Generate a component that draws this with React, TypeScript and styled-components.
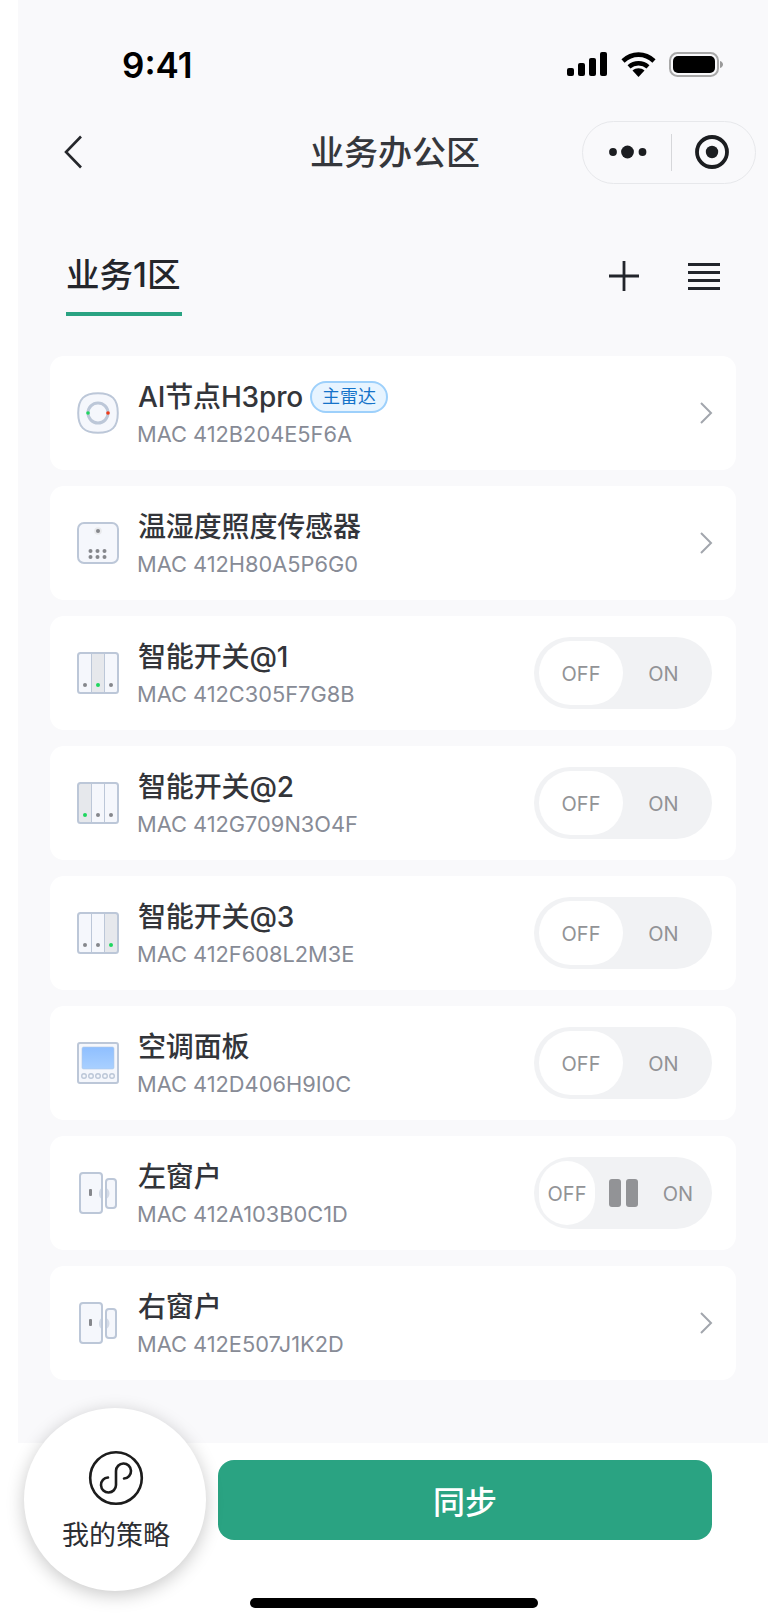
import React from "react";
import styled, { createGlobalStyle } from "styled-components";

const FONT = `Inter, "Noto Sans CJK SC", sans-serif`;

type Device = {
  name: string;
  mac: string;
  icon: "radar" | "sensor" | "switch" | "panel" | "window";
  activeKey?: number;
  badge?: string;
  control: "arrow" | "toggle" | "curtain";
};

const devices: Array<Device> = [
  { name: "AI节点H3pro", mac: "412B204E5F6A", icon: "radar", badge: "主雷达", control: "arrow" },
  { name: "温湿度照度传感器", mac: "412H80A5P6G0", icon: "sensor", control: "arrow" },
  { name: "智能开关@1", mac: "412C305F7G8B", icon: "switch", activeKey: 1, control: "toggle" },
  { name: "智能开关@2", mac: "412G709N3O4F", icon: "switch", activeKey: 0, control: "toggle" },
  { name: "智能开关@3", mac: "412F608L2M3E", icon: "switch", activeKey: 2, control: "toggle" },
  { name: "空调面板", mac: "412D406H9I0C", icon: "panel", control: "toggle" },
  { name: "左窗户", mac: "412A103B0C1D", icon: "window", control: "curtain" },
  { name: "右窗户", mac: "412E507J1K2D", icon: "window", control: "arrow" },
];

const EDGE = "#bcc7d8";
const FILL = "#f5f7fc";

const DeviceIcon = ({ device }: { device: Device }) => {
  if (device.icon === "radar") {
    return (
      <svg width="42" height="42" viewBox="0 0 42 42">
        <path
          d="M21 1.2C35 1.2 40.8 7 40.8 21C40.8 35 35 40.8 21 40.8C7 40.8 1.2 35 1.2 21C1.2 7 7 1.2 21 1.2Z"
          fill={FILL}
          stroke={EDGE}
          strokeWidth="2"
        />
        <circle cx="21" cy="21" r="10" fill="none" stroke={EDGE} strokeWidth="3" />
        <circle cx="11" cy="21" r="1.8" fill="#1fd65f" />
        <circle cx="31" cy="21" r="1.8" fill="#f03a17" />
      </svg>
    );
  }
  if (device.icon === "sensor") {
    const dots = [13.5, 20.5, 27.5];
    return (
      <svg width="42" height="42" viewBox="0 0 42 42">
        <rect x="1" y="1" width="40" height="40" rx="6" fill={FILL} stroke={EDGE} strokeWidth="2" />
        <circle cx="21" cy="9" r="3.8" fill="#e8e9ec" />
        <circle cx="21" cy="9" r="2" fill="#85878c" />
        {dots.map((x) => (
          <React.Fragment key={x}>
            <circle cx={x} cy="29" r="2" fill="#85878c" />
            <circle cx={x} cy="35" r="2" fill="#85878c" />
          </React.Fragment>
        ))}
      </svg>
    );
  }
  if (device.icon === "switch") {
    const columns = [
      { x: 2, w: 13, dot: 8 },
      { x: 15, w: 13, dot: 21 },
      { x: 28, w: 12, dot: 34 },
    ];
    return (
      <svg width="42" height="42" viewBox="0 0 42 42">
        <rect x="1" y="1" width="40" height="40" rx="2.5" fill={FILL} />
        {columns.map((c, i) => (
          <React.Fragment key={c.x}>
            {i === device.activeKey && <rect x={c.x} y="1.5" width={c.w} height="39" fill="#e6e8ec" />}
            <circle cx={c.dot} cy="33" r="2" fill={i === device.activeKey ? "#1fd65f" : "#85878c"} />
          </React.Fragment>
        ))}
        <path d="M14.5 1V41M27.5 1V41" stroke={EDGE} strokeWidth="1" />
        <rect x="1" y="1" width="40" height="40" rx="2.5" fill="none" stroke={EDGE} strokeWidth="2" />
      </svg>
    );
  }
  if (device.icon === "panel") {
    const keys = [7, 14, 21, 28, 35];
    return (
      <svg width="42" height="42" viewBox="0 0 42 42">
        <defs>
          <linearGradient id="panelScreen" x1="0" y1="0" x2="0" y2="1">
            <stop offset="0" stopColor="#8fbfff" />
            <stop offset="1" stopColor="#a9d0ff" />
          </linearGradient>
        </defs>
        <rect x="1" y="1" width="40" height="40" rx="2" fill={FILL} stroke={EDGE} strokeWidth="2" />
        <rect x="5" y="5" width="32" height="22" rx="1.5" fill="url(#panelScreen)" stroke="#b4cbe6" strokeWidth="0.6" />
        {keys.map((x) => (
          <circle key={x} cx={x} cy="34" r="2.3" fill="#f5f7fc" stroke={EDGE} strokeWidth="1.4" />
        ))}
      </svg>
    );
  }
  return (
    <svg width="42" height="42" viewBox="0 0 42 42">
      <rect x="3" y="1" width="22" height="40" rx="3" fill={FILL} stroke={EDGE} strokeWidth="2" />
      <rect x="29" y="7" width="10" height="29" rx="3" fill={FILL} stroke={EDGE} strokeWidth="2" />
      <rect x="12" y="17" width="3" height="7" rx="1" fill="#85878c" />
      <path d="M24 16.5C21.5 18 21 24.5 24 26.5Z" fill="#d3dae6" />
      <path d="M30 16.5C33 18 33.5 24.5 30 26.5Z" fill="#d3dae6" />
    </svg>
  );
};

const App = () => (
  <>
    <GlobalStyle />
    <Page>
      <Surface>
        <StatusBar>
          <Clock>9:41</Clock>
          <StatusIcons>
            <svg width="40" height="25" viewBox="0 0 40 25">
              <rect x="0" y="16" width="7" height="8" rx="2" fill="#000" />
              <rect x="11" y="11" width="7" height="13" rx="2" fill="#000" />
              <rect x="22" y="6" width="7" height="18" rx="2" fill="#000" />
              <rect x="33" y="0" width="7" height="24" rx="2" fill="#000" />
            </svg>
            <svg width="35" height="25" viewBox="0 0 35 25">
              <path d="M2 9C11 0.5 24 0.5 33 9" fill="none" stroke="#000" strokeWidth="4.6" />
              <path d="M8 14.8C13.5 10 21.5 10 27 14.8" fill="none" stroke="#000" strokeWidth="4.4" />
              <path d="M11.5 18.6C15 15.5 20 15.5 23.5 18.6L17.5 25Z" fill="#000" />
            </svg>
            <svg width="54" height="25" viewBox="0 0 54 25">
              <rect x="1" y="1" width="48" height="23" rx="7.5" fill="none" stroke="#a8a8a8" strokeWidth="2" />
              <rect x="4" y="4" width="42" height="17" rx="5" fill="#000" />
              <path d="M51 9C53 9.6 54 11 54 12.5C54 14 53 15.4 51 16Z" fill="#9a9a9a" />
            </svg>
          </StatusIcons>
        </StatusBar>

        <NavBar>
          <BackButton>
            <svg width="20" height="34" viewBox="0 0 20 34">
              <path d="M18 1.5L3 17L18 32.5" fill="none" stroke="#25272b" strokeWidth="2.6" />
            </svg>
          </BackButton>
          <NavTitle>业务办公区</NavTitle>
          <Capsule>
            <svg width="38" height="14" viewBox="0 0 38 14">
              <circle cx="4" cy="7" r="3.9" fill="#1b1d20" />
              <circle cx="18.5" cy="7" r="6.4" fill="#1b1d20" />
              <circle cx="33.5" cy="7" r="3.9" fill="#1b1d20" />
            </svg>
            <CapsuleDivider />
            <svg width="34" height="34" viewBox="0 0 34 34">
              <circle cx="17" cy="17" r="15" fill="none" stroke="#1b1d20" strokeWidth="3.8" />
              <circle cx="17" cy="17" r="6.2" fill="#1b1d20" />
            </svg>
          </Capsule>
        </NavBar>

        <TabBar>
          <Tab>业务1区</Tab>
          <TabActions>
            <svg width="32" height="32" viewBox="0 0 32 32">
              <path d="M16 1V31M1 16H31" stroke="#22252b" strokeWidth="2.8" />
            </svg>
            <svg width="32" height="27" viewBox="0 0 32 27">
              <path d="M0 1.5H32M0 9.5H32M0 17.5H32M0 25.5H32" stroke="#22252b" strokeWidth="2.8" />
            </svg>
          </TabActions>
        </TabBar>

        <DeviceList>
          {devices.map((device) => (
            <DeviceCard key={device.mac}>
              <IconSlot>
                <DeviceIcon device={device} />
              </IconSlot>
              <DeviceText>
                <NameRow>
                  <DeviceName>{device.name}</DeviceName>
                  {device.badge && <Badge>{device.badge}</Badge>}
                </NameRow>
                <DeviceMac>MAC {device.mac}</DeviceMac>
              </DeviceText>
              {device.control === "arrow" && (
                <Arrow>
                  <svg width="14" height="24" viewBox="0 0 14 24">
                    <path d="M2 2L12 12L2 22" fill="none" stroke="#a2a6ad" strokeWidth="2" />
                  </svg>
                </Arrow>
              )}
              {device.control === "toggle" && (
                <Toggle>
                  <Knob $wide>OFF</Knob>
                  <ToggleLabel $wide>ON</ToggleLabel>
                </Toggle>
              )}
              {device.control === "curtain" && (
                <Toggle>
                  <Knob>OFF</Knob>
                  <PauseMark>
                    <PauseBar />
                    <PauseBar />
                  </PauseMark>
                  <ToggleLabel>ON</ToggleLabel>
                </Toggle>
              )}
            </DeviceCard>
          ))}
        </DeviceList>
      </Surface>

      <Footer>
        <SyncButton>同步</SyncButton>
        <HomeIndicator />
      </Footer>

      <StrategyBubble>
        <svg width="56" height="56" viewBox="0 0 56 56">
          <circle cx="28" cy="28" r="25.8" fill="none" stroke="#1c1c1c" strokeWidth="2.6" />
          <path
            d="M36 28.5A7.5 7.5 0 1 0 28 21V35A7.5 7.5 0 1 1 20 27.5"
            fill="none"
            stroke="#1c1c1c"
            strokeWidth="2.6"
            strokeLinecap="round"
          />
        </svg>
        <StrategyLabel>我的策略</StrategyLabel>
      </StrategyBubble>
    </Page>
  </>
);

export default App;

const GlobalStyle = createGlobalStyle`
  html, body {
    margin: 0;
    padding: 0;
    background: #fff;
  }
  body {
    font-family: ${FONT};
  }
`;

const Page = styled.div`
  position: relative;
  width: 768px;
  height: 1624px;
  overflow: hidden;
  display: flex;
  flex-direction: column;
`;

const Surface = styled.div`
  margin-left: 18px;
  height: 1443px;
  background: #f9f9fb;
  display: flex;
  flex-direction: column;
`;

const StatusBar = styled.div`
  height: 104px;
  padding: 48px 45px 0 104px;
  box-sizing: border-box;
  display: flex;
  justify-content: space-between;
`;

const Clock = styled.div`
  font-size: 35px;
  font-weight: 600;
  line-height: 34px;
  color: #000;
`;

const StatusIcons = styled.div`
  display: flex;
  align-items: flex-start;
  gap: 13.5px;
  padding-top: 4px;
`;

const NavBar = styled.div`
  position: relative;
  height: 96px;
  padding: 0 12px 0 45px;
  display: flex;
  align-items: center;
  justify-content: space-between;
`;

const BackButton = styled.div`
  display: flex;
  align-items: center;
`;

const NavTitle = styled.div`
  position: absolute;
  left: 292px;
  width: 166px;
  padding-bottom: 4px;
  text-align: center;
  font-size: 34px;
  font-weight: 500;
  color: #35373c;
  white-space: nowrap;
`;

const Capsule = styled.div`
  width: 174px;
  height: 63px;
  box-sizing: border-box;
  border: 1px solid #e7e8eb;
  border-radius: 32px;
  display: flex;
  align-items: center;
  justify-content: space-between;
  padding: 0 26px;
`;

const CapsuleDivider = styled.div`
  width: 1px;
  height: 37px;
  background: #d6d7da;
`;

const TabBar = styled.div`
  height: 156px;
  padding: 0 48px;
  display: flex;
  justify-content: space-between;
  align-items: flex-start;
`;

const Tab = styled.div`
  height: 116px;
  width: 116px;
  padding-top: 54px;
  box-sizing: border-box;
  font-size: 33.5px;
  font-weight: 500;
  line-height: 42px;
  color: #24262b;
  border-bottom: 4px solid #2aa382;
  white-space: nowrap;
`;

const TabActions = styled.div`
  display: flex;
  align-items: center;
  gap: 48px;
  padding-top: 60px;
`;

const DeviceList = styled.div`
  padding: 0 32px;
  display: flex;
  flex-direction: column;
  gap: 16px;
`;

const DeviceCard = styled.div`
  height: 114px;
  box-sizing: border-box;
  background: #fff;
  border-radius: 14px;
  padding: 0 24px 0 27px;
  display: flex;
  align-items: center;
`;

const IconSlot = styled.div`
  width: 42px;
  height: 42px;
  flex: none;
`;

const DeviceText = styled.div`
  flex: 1;
  margin-left: 18px;
  display: flex;
  flex-direction: column;
  gap: 5px;
`;

const NameRow = styled.div`
  display: flex;
  align-items: center;
  gap: 7px;
  height: 38px;
  padding-left: 1px;
`;

const DeviceName = styled.div`
  font-size: 28px;
  font-weight: 500;
  letter-spacing: -0.15px;
  color: #33353a;
  line-height: 38px;
  white-space: nowrap;
`;

const Badge = styled.div`
  height: 32px;
  width: 78px;
  box-sizing: border-box;
  border: 2px solid #9dd0fb;
  border-radius: 16px;
  background: #e7f4ff;
  color: #1573c9;
  font-size: 18px;
  line-height: 28px;
  text-align: center;
  white-space: nowrap;
`;

const DeviceMac = styled.div`
  font-size: 21.8px;
  line-height: 28px;
  margin-top: -1px;
  color: #878b96;
  white-space: nowrap;
`;

const Arrow = styled.div`
  display: flex;
  align-items: center;
  margin-right: -1px;
`;

const Toggle = styled.div`
  width: 178px;
  height: 72px;
  box-sizing: border-box;
  padding: 4px 5px;
  border-radius: 36px;
  background: #f1f2f4;
  display: flex;
  align-items: center;
  justify-content: space-between;
  font-size: 20px;
  line-height: 26px;
  color: #929396;
`;

const Knob = styled.div<{ $wide?: boolean }>`
  width: ${(props) => (props.$wide ? "84px" : "56px")};
  height: 64px;
  padding-top: 1px;
  box-sizing: border-box;
  border-radius: 32px;
  background: #fff;
  display: flex;
  align-items: center;
  justify-content: center;
  white-space: nowrap;
`;

const ToggleLabel = styled.div<{ $wide?: boolean }>`
  width: ${(props) => (props.$wide ? "72px" : "58px")};
  padding-top: 1px;
  padding-right: ${(props) => (props.$wide ? "15px" : "0")};
  box-sizing: border-box;
  text-align: center;
`;

const PauseMark = styled.div`
  display: flex;
  gap: 5px;
  margin-left: 2px;
`;

const PauseBar = styled.div`
  width: 12px;
  height: 28px;
  border-radius: 3px;
  background: #929396;
`;

const Footer = styled.div`
  flex: 1;
  background: #fff;
  display: flex;
  flex-direction: column;
  padding-top: 17px;
`;

const SyncButton = styled.div`
  margin-left: 218px;
  width: 494px;
  height: 80px;
  border-radius: 16px;
  background: #2aa382;
  color: #fff;
  font-size: 32px;
  font-weight: 500;
  display: flex;
  align-items: center;
  justify-content: center;
`;

const HomeIndicator = styled.div`
  margin: 58px 0 0 250px;
  width: 288px;
  height: 10px;
  border-radius: 5px;
  background: #000;
`;

const StrategyBubble = styled.div`
  position: absolute;
  left: 24px;
  top: 1408px;
  width: 182px;
  height: 183px;
  border-radius: 50%;
  background: #fff;
  box-shadow: 0 4px 18px rgba(0, 0, 0, 0.22);
  display: flex;
  flex-direction: column;
  align-items: center;
  padding: 42px 0 0 2px;
  box-sizing: border-box;
`;

const StrategyLabel = styled.div`
  margin-top: 12px;
  font-size: 27px;
  line-height: 36px;
  color: #2c2e33;
  white-space: nowrap;
`;
